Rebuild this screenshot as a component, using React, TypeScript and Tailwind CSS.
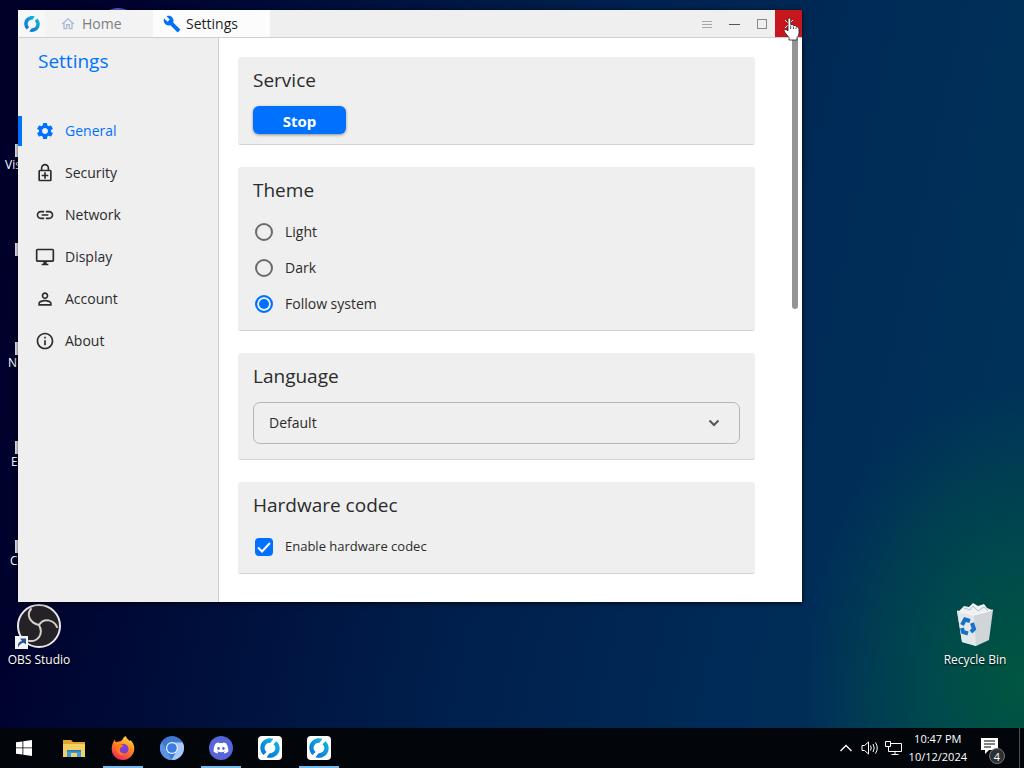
import React, { useState } from 'react';
import {
  MdBuild,
  MdInfoOutline,
  MdLink,
  MdOutlineDesktopWindows,
  MdOutlineEnhancedEncryption,
  MdOutlineHome,
  MdPersonOutline,
  MdSettings
} from 'react-icons/md';
import { FaDiscord } from 'react-icons/fa';

const NAV_ITEMS = [
  { name: 'General', icon: MdSettings },
  { name: 'Security', icon: MdOutlineEnhancedEncryption },
  { name: 'Network', icon: MdLink },
  { name: 'Display', icon: MdOutlineDesktopWindows },
  { name: 'Account', icon: MdPersonOutline },
  { name: 'About', icon: MdInfoOutline }
];

const THEMES = ['Light', 'Dark', 'Follow system'];

// Shortcuts whose right part lies behind the window
const COVERED_SHORTCUTS = [
  { label: 'Vis', pad: 'pl-[5px]' },
  { label: '', pad: 'pl-2' },
  { label: 'N', pad: 'pl-2' },
  { label: 'E', pad: 'pl-[11px]' },
  { label: 'C', pad: 'pl-[10px]' }
];

function RustDeskLogo({ className }: { className: string }) {
  return (
    <svg viewBox="0 0 32 32" className={className} aria-hidden="true">
      <defs>
        <linearGradient id="rd" x1="0" y1="1" x2="1" y2="0">
          <stop offset="0" stopColor="#0a6fdc" />
          <stop offset="1" stopColor="#12b9dd" />
        </linearGradient>
      </defs>
      <path
        fill="url(#rd)"
        d="M21.500 1.200C13 -2 4 3 1.300 10.500C-.6 16.500 1 23 5.600 27L10.500 22.200C7 19.500 6.500 15 8.700 11.600C10.600 8.600 13.800 7.400 16.800 7.700Z"
      />
      <path
        fill="url(#rd)"
        d="M10.500 30.800C19 34 28 29 30.700 21.500C32.600 15.500 31 9 26.400 5L21.500 9.800C25 12.500 25.500 17 23.300 20.400C21.400 23.400 18.200 24.600 15.200 24.300Z"
      />
    </svg>
  );
}

function ShortcutBadge() {
  return (
    <svg viewBox="0 0 13 13" className="absolute bottom-0 left-[15px] size-[13px]" aria-hidden="true">
      <rect width="13" height="13" fill="#f3f5fa" />
      <path d="M3 11.500C2.500 7.500 4.500 5.300 7 5L5 2.500H11V8.500L8.800 6.800C6 7.300 4.500 8.500 3 11.500Z" fill="#2a4f9c" />
    </svg>
  );
}

function ObsIcon() {
  return (
    <svg viewBox="0 0 46 46" className="size-[46px]" aria-hidden="true">
      <circle cx="23" cy="23" r="21" fill="#242127" stroke="#e8e8e8" strokeWidth="2" />
      <g fill="none" stroke="#d5d1cc" strokeWidth="2" strokeLinecap="round">
        <path d="M23 22C14 20 10 12 15 6" />
        <path d="M23 22C28 14 38 17 41 24" />
        <path d="M23 22C28 31 22 39 13 38" />
      </g>
    </svg>
  );
}

function RecycleBinIcon() {
  return (
    <svg viewBox="0 0 40 46" className="h-[46px] w-10" aria-hidden="true">
      <path d="M4 9L9 4L14 5L18 1L23 4L29 2L32 6L37 8L33 13L7 14Z" fill="#eef1f3" />
      <path d="M9 6L15 8L18 4L23 9L29 5L33 9" fill="none" stroke="#b6bfc6" strokeWidth="1" />
      <path d="M2 9L19 13L38 8L34 38L21 44L7 40Z" fill="#cfd5d9" />
      <path d="M2 9L19 13L21 44L7 40Z" fill="#e3e7e9" />
      <path d="M2 9L19 13L38 8" fill="none" stroke="#fafafa" strokeWidth="1" />
      <g fill="none" stroke="#1672c8" strokeWidth="4">
        <path d="M7 23L10 17.500L15 19" />
        <path d="M17 21L19 27L16 30" />
        <path d="M13 31.500L8 30L7 26" />
      </g>
    </svg>
  );
}

function WindowsIcon() {
  return (
    <svg viewBox="0 0 16 16" className="size-4" fill="#fff" aria-hidden="true">
      <path d="M0 2.300L6.500 1.400V7.500H0ZM7.300 1.300L16 0V7.500H7.300ZM0 8.300H6.500V14.600L0 13.700ZM7.300 8.300H16V16L7.300 14.700Z" />
    </svg>
  );
}

function FolderIcon() {
  return (
    <svg viewBox="0 0 22 19" className="h-[19px] w-[22px]" aria-hidden="true">
      <path d="M0 1H8L10 3H22V17H0Z" fill="#dfa52c" />
      <path d="M0 5H22V18H0Z" fill="#f5d060" />
      <path d="M4 18V11H18V18H14V14H8V18Z" fill="#3c9ade" />
      <path d="M4 11H18V12.500H4Z" fill="#2479bd" />
    </svg>
  );
}

function FirefoxIcon() {
  return (
    <svg viewBox="0 0 24 24" className="size-6" aria-hidden="true">
      <defs>
        <linearGradient id="ff" x1="0.8" y1="0" x2="0.300" y2="1">
          <stop offset="0" stopColor="#ffe24a" />
          <stop offset="0.450" stopColor="#ff8a1e" />
          <stop offset="1" stopColor="#f0245c" />
        </linearGradient>
      </defs>
      <path
        d="M14.500 0C16 2 17 4 19 5L19.500 4C22 6.500 23.500 9.500 23.300 13C23 19 18 24 12 24C5.500 24 .6 19 .7 13C.7 9 2 6 4 3.500L4.500 6L8 5.500C10 5.500 11.500 4 12 2.500C12.500 1.500 13.500 .8 14.500 0Z"
        fill="url(#ff)"
      />
      <circle cx="12.500" cy="13" r="5" fill="#7b3fd1" />
      <path d="M4.500 9C8 7.500 10 9 12.500 9.500C11.500 11.500 9.500 10.800 9 13C8.500 16 11 18 15 17.500C10 21 4.500 18 4.500 9Z" fill="#ff7a1c" />
    </svg>
  );
}

function ChromiumIcon() {
  return (
    <svg viewBox="0 0 24 24" className="size-6" aria-hidden="true">
      <circle cx="12" cy="12" r="12" fill="#3f78d1" />
      <path d="M12 6.500H22.700A12 12 0 0 1 11.500 24L17 14.500Z" fill="#a9c7f7" />
      <path d="M12 24A12 12 0 0 1 1.600 6L7 14.500Z" fill="#5a92e6" />
      <circle cx="12" cy="12" r="6" fill="#e8f1ff" />
      <circle cx="12" cy="12" r="4.800" fill="#3b7de0" />
    </svg>
  );
}

function DiscordIcon() {
  return (
    <span className="flex size-6 items-center justify-center rounded-full bg-[#5865d8]">
      <FaDiscord className="size-4 text-white" />
    </span>
  );
}

function RustDeskTile() {
  return (
    <span className="flex size-6 items-center justify-center rounded-[4px] bg-white">
      <RustDeskLogo className="size-5" />
    </span>
  );
}

const TASKBAR_APPS = [
  { name: 'Start', icon: WindowsIcon, running: false },
  { name: 'File Explorer', icon: FolderIcon, running: false },
  { name: 'Firefox', icon: FirefoxIcon, running: true },
  { name: 'Chromium', icon: ChromiumIcon, running: false },
  { name: 'Discord', icon: DiscordIcon, running: true },
  { name: 'RustDesk', icon: RustDeskTile, running: false },
  { name: 'RustDesk window', icon: RustDeskTile, running: true }
];

function Card({ title, className, children }: { title: string; className: string; children: React.ReactNode }) {
  return (
    <section className={`rounded-[3px] border-b border-[#d2d2d2] bg-[#efefef] px-[15px] ${className}`}>
      <h2 className="pt-2 text-[19px] leading-[30px] text-[#2b2b2b]">{title}</h2>
      {children}
    </section>
  );
}

function TitleBar() {
  return (
    <header className="flex h-7 items-stretch border-b border-[#cfcfcf] bg-[#efefef] text-sm">
      <div className="flex w-[27px] items-center justify-center bg-[#f7f7f7]">
        <RustDeskLogo className="size-4" />
      </div>
      <button className="flex w-[108px] items-center gap-[6px] bg-[#f3f3f3] pl-[15px] text-[#7d7d7d]">
        <MdOutlineHome className="size-4 text-[#a9b9d6]" />
        Home
      </button>
      <button className="flex w-[117px] items-center gap-[5px] bg-[#fcfcfc] pl-[10px] text-[#1c1c1c]">
        <MdBuild className="size-[18px] text-[#0071ff]" />
        Settings
      </button>
      <div className="ml-auto flex">
        <button aria-label="Menu" className="flex w-7 items-center justify-center">
          <svg viewBox="0 0 10 8" className="h-2 w-[10px]" stroke="#a8a8a8">
            <path d="M0 1.500H10M0 4.500H10M0 7.500H10" />
          </svg>
        </button>
        <button aria-label="Minimize" className="flex w-[27px] items-center justify-center">
          <svg viewBox="0 0 11 2" className="h-[2px] w-[11px]">
            <path d="M0 1.500H11" stroke="#555" />
          </svg>
        </button>
        <button aria-label="Maximize" className="flex w-[27px] items-center justify-center">
          <span className="size-[10px] border border-[#888]" />
        </button>
        <button aria-label="Close" className="flex w-[27px] items-center justify-center bg-[#c8161d]">
          <svg viewBox="0 0 10 10" className="size-[10px]" stroke="#fff">
            <path d="M1 1L9 9M9 1L1 9" />
          </svg>
        </button>
      </div>
    </header>
  );
}

function SettingsWindow() {
  const [page, setPage] = useState('General');
  const [theme, setTheme] = useState('Follow system');
  const [hwCodec, setHwCodec] = useState(true);

  return (
    <main className="absolute top-[10px] right-[222px] left-[18px] bg-white shadow-[0_1px_5px_rgba(0,0,0,0.8)]">
      <TitleBar />
      <div className="flex">
        <aside className="w-[201px] shrink-0 border-r border-[#cfcfcf] bg-[#efefef]">
          <h1 className="h-[72px] pt-2 pl-5 text-[19px] leading-[30px] text-[#0071ff]">Settings</h1>
          <nav className="flex flex-col">
            {NAV_ITEMS.map(({ name, icon: Icon }) => (
              <button
                key={name}
                onClick={() => setPage(name)}
                className={`flex h-[42px] items-center text-sm ${page === name ? 'text-[#0071ff]' : 'text-[#2b2b2b]'}`}
              >
                <span className={`h-[30px] w-1 ${page === name ? 'bg-[#0071ff]' : ''}`} />
                <Icon className="mr-[10px] ml-[13px] size-5" />
                {name}
              </button>
            ))}
          </nav>
        </aside>

        <div className="flex min-w-0 flex-1 flex-col gap-[22px] pt-[19px] pr-7 pb-7 pl-[19px] text-[#2b2b2b]">
          <Card title="Service" className="pb-[10px]">
            <button className="mt-[11px] block h-7 w-[93px] rounded-[6px] bg-[#0071ff] pt-px text-[15px] font-bold text-white shadow-[0_1px_3px_rgba(0,0,0,0.4)]">
              Stop
            </button>
          </Card>

          <Card title="Theme" className="pb-2">
            <div className="mt-[9px]">
              {THEMES.map((t) => (
                <label key={t} className="flex h-9 items-center text-sm">
                  <input
                    type="radio"
                    name="theme"
                    checked={theme === t}
                    onChange={() => setTheme(t)}
                    className="mr-3 ml-[2px] size-[18px] appearance-none rounded-full border-2 border-[#6b6b6b] checked:border-[#0071ff] checked:bg-[#0071ff] checked:shadow-[inset_0_0_0_2px_#efefef]"
                  />
                  {t}
                </label>
              ))}
            </div>
          </Card>

          <Card title="Language" className="pb-[15px]">
            <div className="relative mt-[11px]">
              <select
                aria-label="Language"
                className="h-[42px] w-full appearance-none rounded-[7px] border border-[#b5b5b5] bg-transparent px-[15px] text-sm"
              >
                <option>Default</option>
              </select>
              <svg viewBox="0 0 12 8" className="pointer-events-none absolute top-[17px] right-5 h-2 w-3" fill="none">
                <path d="M1.500 1.500L6 6L10.500 1.500" stroke="#555" strokeWidth="2" />
              </svg>
            </div>
          </Card>

          <Card title="Hardware codec" className="pb-2">
            <label className="mt-[9px] flex h-9 items-center text-[13px]">
              <span className="relative mr-3 ml-[2px] size-[18px]">
                <input
                  type="checkbox"
                  checked={hwCodec}
                  onChange={(e) => setHwCodec(e.target.checked)}
                  className="block size-[18px] appearance-none rounded-[4px] border-2 border-[#6b6b6b] checked:border-[#0071ff] checked:bg-[#0071ff]"
                />
                {hwCodec && (
                  <svg viewBox="0 0 18 18" className="pointer-events-none absolute inset-0" fill="none">
                    <path d="M3 9.500L7 13.500L15 5" stroke="#fff" strokeWidth="2" />
                  </svg>
                )}
              </span>
              Enable hardware codec
            </label>
          </Card>
        </div>

        {/* scrollbar */}
        <div className="w-[19px] shrink-0 pl-[9px]">
          <div className="h-[48%] w-[6px] rounded-b-[3px] bg-[#949494]" />
        </div>
      </div>
    </main>
  );
}

function Taskbar() {
  return (
    <footer className="flex h-10 shrink-0 items-stretch bg-[#02060b] text-white">
      {TASKBAR_APPS.map(({ name, icon: Icon, running }) => (
        <button
          key={name}
          aria-label={name}
          className={`mr-[9px] flex w-10 items-center justify-center border-y-2 border-t-transparent first:mr-[10px] first:ml-1 ${running ? 'border-b-[#76b9ed]' : 'border-b-transparent'}`}
        >
          <Icon />
        </button>
      ))}
      <div className="ml-auto flex items-center">
        <svg viewBox="0 0 12 8" className="mr-[9px] h-2 w-3" fill="none" stroke="#fff" aria-hidden="true">
          <path d="M.5 7L6 1.500L11.500 7" strokeWidth="1.300" />
        </svg>
        <svg viewBox="0 0 18 16" className="mr-[6px] h-4 w-[18px]" fill="none" stroke="#fff" aria-hidden="true">
          <path d="M1 5.500H3.500L7.500 2V14L3.500 10.500H1Z" />
          <path d="M9.500 5.500Q11 8 9.500 10.500M12 4Q14.500 8 12 12M14.500 2.500Q18 8 14.500 13.500" />
        </svg>
        <svg viewBox="0 0 17 16" className="mr-[7px] h-4 w-[17px]" fill="none" stroke="#fff" aria-hidden="true">
          <path d="M5.500 3.500H16.500V11.500H3.500V7M10 11.500V14.500M6.500 14.500H13.500" />
          <path d="M.5 1.500H5.500V6.500H.5ZM3.500 6.500V9" />
        </svg>
        <div className="text-center text-[11px] leading-[18px]">
          <div>10:47 PM</div>
          <div>10/12/2024</div>
        </div>
        <div className="relative mr-[14px] ml-[14px] h-6 w-6">
          <svg viewBox="0 0 18 18" className="size-[18px]" aria-hidden="true">
            <path d="M0 2H17V14H8L4 18V14H0Z" fill="#fff" />
            <path d="M3 5H14M3 8H14M3 11H10" stroke="#02060b" strokeWidth="1.200" />
          </svg>
          <span className="absolute right-0 -bottom-1 flex size-4 items-center justify-center rounded-full border border-[#777] bg-[#2d3033] text-[11px] leading-none">
            4
          </span>
        </div>
        <div className="mr-1 h-10 w-px bg-[#4a5258]" />
      </div>
    </footer>
  );
}

export default function App() {
  return (
    <div className="flex min-h-screen flex-col font-['Open_Sans','Noto_Sans',sans-serif]">
      <div className="relative flex-1 overflow-hidden bg-[radial-gradient(ellipse_220px_300px_at_100%_94%,#00573f_0%,#004a4c_40%,transparent_100%),linear-gradient(102deg,#000029_0%,#00022e_12%,#001f4c_50%,#002b58_75%,#003459_100%)] text-xs text-white">
        {/* desktop shortcuts */}
        <div className="absolute top-[108px] left-0 w-[78px]">
          {COVERED_SHORTCUTS.map(({ label, pad }, i) => (
            <div key={i} className="h-[99px]">
              <div className="relative h-[49px]">
                <ShortcutBadge />
              </div>
              <div className={`leading-4 ${pad}`}>{label}</div>
            </div>
          ))}
          <div className="flex flex-col items-center">
            <div className="relative flex h-[46px] w-full justify-center">
              <ObsIcon />
              <ShortcutBadge />
            </div>
            <div className="mt-[3px] leading-4 whitespace-nowrap [text-shadow:0_1px_2px_#000]">OBS Studio</div>
          </div>
        </div>
        <div className="absolute top-2 left-[96px] size-11 rounded-full bg-[#5865d8]" />
        <div className="absolute top-[602px] right-[10px] flex w-[78px] flex-col items-center">
          <RecycleBinIcon />
          <div className="mt-1 leading-4 whitespace-nowrap [text-shadow:0_1px_2px_#000]">Recycle Bin</div>
        </div>

        <SettingsWindow />

        {/* pointer over the close button */}
        <svg viewBox="0 0 17 24" className="pointer-events-none absolute top-[17px] right-[224px] h-6 w-[17px]" aria-hidden="true">
          <path
            d="M5 14V2.500Q5 1 6.300 1T7.700 2.500V7.500Q10 7 10.400 8.500Q12.500 8 13 9.500Q16 9.500 16 12V16Q16 19 14 20.500V23H6V20.500L1.500 15Q.5 13 2 12.500Q3.500 12.300 5 14Z"
            fill="#fff"
            stroke="#222"
            strokeWidth=".8"
          />
          <path d="M7.700 8.500V12M10.400 9.500V12M13 10.500V12" stroke="#222" strokeWidth=".8" />
        </svg>
      </div>
      <Taskbar />
    </div>
  );
}
